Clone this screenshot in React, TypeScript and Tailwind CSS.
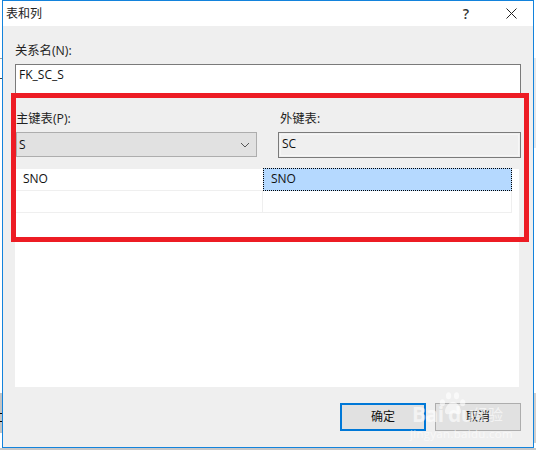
export default function App() {
  const font = { fontFamily: '"Open Sans", "Noto Sans CJK SC", sans-serif' };
  return (
    <div className="relative w-[536px] h-[450px] overflow-hidden bg-white" style={font}>
      {/* desktop strips behind the dialog */}
      <div className="absolute left-0 top-[58px] w-[2px] h-[1px] bg-[#a0a0a0]" />
      <div className="absolute left-0 top-[78px] w-[2px] h-[1px] bg-[#404040]" />
      <div className="absolute left-0 top-[393px] w-[2px] h-[40px] bg-[#c4c4c4]" />
      <div className="absolute left-0 top-[413px] w-[2px] h-[1px] bg-black" />
      <div className="absolute left-0 top-[421px] w-[2px] h-[1px] bg-black" />
      <div className="absolute right-0 top-[58px] w-[2px] h-[90px] bg-[#e4e8ec]" />
      <div className="absolute right-0 top-[393px] w-[2px] h-[50px] bg-[#d0d0d0]" />
      <div className="absolute left-0 right-0 top-[448px] h-[2px] bg-[#c8c8c8]" />

      <div className="ml-[2px] w-[532px] h-[448px] flex flex-col border border-[#1383dc] bg-[#efefef] relative z-10">
        {/* title bar */}
        <div className="h-[25px] shrink-0 bg-white flex items-center pl-[3px] text-[12px] text-[#222]">
          <span>表和列</span>
          <span className="ml-auto mr-[37px] text-[14px] font-semibold text-[#333]">?</span>
          <svg width="11" height="11" viewBox="0 0 11 11" className="mr-[16px]">
            <path d="M0.5 0.5 L10.5 10.5 M10.5 0.5 L0.5 10.5" stroke="#222" strokeWidth="1" fill="none" />
          </svg>
        </div>

        <div className="flex-1 flex flex-col pl-[12px] pr-[12px]">
          <div className="mt-[16px] h-[18px] text-[12.3px] leading-[18px] text-[#222]">关系名(N):</div>
          <div className="mt-[4px] h-[32px] w-[506px] bg-white border border-[#7a7a7a] pl-[3px] text-[12px] leading-[20px] text-[#111]">
            FK_SC_S
          </div>

          <div className="mt-[14px] flex">
            <div className="w-[241px] ml-px">
              <div className="h-[18px] text-[12.3px] leading-[18px] text-[#222]">主键表(P):</div>
              <div className="mt-[4px] h-[25px] bg-[#e1e1e1] border border-[#adadad] flex items-center pl-[2px] pr-[6px] text-[12px] text-[#111]">
                <span>S</span>
                <svg width="10" height="6" viewBox="0 0 10 6" className="ml-auto">
                  <path d="M1 1 L5 5 L9 1" stroke="#555" strokeWidth="1" fill="none" />
                </svg>
              </div>
            </div>
            <div className="w-[243px] ml-[21px]">
              <div className="h-[18px] text-[12.3px] leading-[18px] pl-[2px] text-[#222]">外键表:</div>
              <div className="mt-[4px] h-[26px] border border-[#7a7a7a] p-px">
                <div className="h-full border border-[#f6f6f6] pl-[1px] text-[12px] leading-[18px] text-[#111]">SC</div>
              </div>
            </div>
          </div>

          {/* grid */}
          <div className="mt-[11px] w-[504px] h-[218px] bg-white">
            <div className="w-[497px] flex flex-col text-[12px] text-[#111]">
              <div className="flex h-[22px] border-b border-[#efefef]">
                <div className="w-[248px] pl-[8px] leading-[20px]">SNO</div>
                <div className="flex-1 pl-[7px] -mt-px h-[23px] leading-[20px] bg-[#b5d9ff] border border-dotted border-black">SNO</div>
              </div>
              <div className="flex h-[22px] border-b border-[#efefef]">
                <div className="w-[248px] border-r border-[#efefef]" />
                <div className="flex-1 border-r border-[#efefef]" />
              </div>
            </div>
          </div>

          {/* buttons */}
          <div className="mt-[16px] flex justify-end w-[506px] gap-[9px]">
            <div className="w-[86px] h-[28px] bg-[#e1e1e1] border-2 border-[#0078d7] flex items-center justify-center text-[12px] text-[#111]">确定</div>
            <div className="w-[86px] h-[28px] bg-[#e1e1e1] border border-[#adadad] flex items-center justify-center text-[12px] text-[#111]">取消</div>
          </div>
        </div>
      </div>

      {/* red annotation frame */}
      <div className="absolute z-20 left-[11px] top-[93px] w-[518px] h-[149px] border-[5px] border-[#ed1c24]" />

      {/* watermark */}
      <div className="absolute z-30 left-[408px] top-[391px] w-[104px] h-[48px] text-white pointer-events-none">
        <svg width="30" height="27" viewBox="0 0 34 30" className="absolute left-[30px] top-0" fill="#ffffff" fillOpacity="0.6">
          <ellipse cx="5" cy="13" rx="3" ry="4" />
          <ellipse cx="12" cy="5" rx="3" ry="4" />
          <ellipse cx="21" cy="5" rx="3" ry="4" />
          <ellipse cx="28" cy="13" rx="3" ry="4" />
          <path d="M17 12 C12 12 7 20 8 24 C10 28 14 25 17 25 C20 25 24 28 26 24 C27 20 22 12 17 12 Z" />
        </svg>
        <span className="absolute left-[4px] top-[11px] text-[21px] leading-[24px] font-bold tracking-tight opacity-60">Bai</span>
        <span className="absolute left-[40px] top-[11px] text-[21px] leading-[24px] font-bold tracking-tight opacity-60">du</span>
        <span className="absolute left-[65px] top-[12px] text-[15px] leading-[22px] opacity-60">经验</span>
        <span className="absolute left-[2px] top-[36px] text-[11.5px] leading-[14px] tracking-[0.3px] opacity-60">jingyan.baidu.com</span>
      </div>
    </div>
  );
}
